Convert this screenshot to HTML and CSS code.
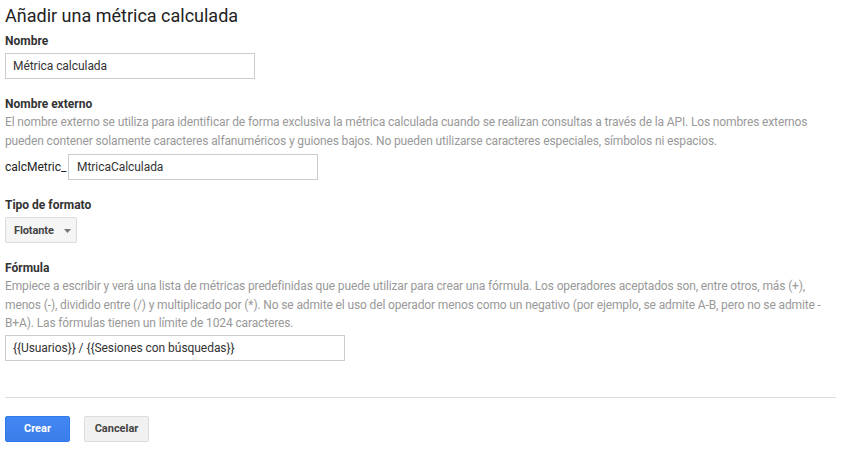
FILE: index.html
```html
<!DOCTYPE html>
<html lang="es">
<head>
<meta charset="utf-8">
<title>Añadir una métrica calculada</title>
<link rel="stylesheet" href="styles.css">
</head>
<body>
<div class="page">
  <h1 class="title">Añadir una métrica calculada</h1>

  <div class="field first">
    <div class="label">Nombre</div>
    <input class="input w250" type="text" value="Métrica calculada">
  </div>

  <div class="field">
    <div class="label">Nombre externo</div>
    <p class="desc">El nombre externo se utiliza para identificar de forma exclusiva la métrica calculada cuando se realizan consultas a través de la API. Los nombres externos pueden contener solamente caracteres alfanuméricos y guiones bajos. No pueden utilizarse caracteres especiales, símbolos ni espacios.</p>
    <div class="prefix-row">
      <span class="prefix">calcMetric_</span>
      <input class="input w250 pad9" type="text" value="MtricaCalculada">
    </div>
  </div>

  <div class="field">
    <div class="label">Tipo de formato</div>
    <button class="dropdown" type="button">
      <span>Flotante</span>
      <svg class="caret" width="7" height="4" viewBox="0 0 7 4"><path d="M0 0h7L3.5 4z" fill="#777"/></svg>
    </button>
  </div>

  <div class="field">
    <div class="label">Fórmula</div>
    <p class="desc tight">Empiece a escribir y verá una lista de métricas predefinidas que puede utilizar para crear una fórmula. Los operadores aceptados son, entre otros, más (+), menos (-), dividido entre (/) y multiplicado por (*). No se admite el uso del operador menos como un negativo (por ejemplo, se admite A-B, pero no se admite -B+A). Las fórmulas tienen un límite de 1024 caracteres.</p>
    <input class="input w340" type="text" value="{{Usuarios}} / {{Sesiones con búsquedas}}">
  </div>

  <hr class="divider">

  <div class="actions">
    <button class="btn primary" type="button">Crear</button>
    <button class="btn secondary" type="button">Cancelar</button>
  </div>
</div>
</body>
</html>
```

FILE: styles.css
```css
html, body {
  margin: 0;
  padding: 0;
  background: #fff;
}
body {
  font-family: Roboto, "Liberation Sans", Arial, sans-serif;
  color: #222;
}
.page {
  padding: 4px 8px 0 5px;
}
.title {
  margin: 0;
  font-size: 18px;
  line-height: 24px;
  font-weight: 400;
  color: #222;
}
.field {
  margin-top: 17px;
}
.field.first {
  margin-top: 5px;
}
.label {
  font-size: 12px;
  line-height: 16px;
  font-weight: 700;
  color: #333;
  margin-bottom: 4px;
}
.desc {
  margin: -3px 0 4px;
  font-size: 12px;
  line-height: 18.5px;
  letter-spacing: -0.13px;
  color: #999;
}
.desc.tight {
  margin-bottom: 2px;
}
.input {
  display: block;
  box-sizing: border-box;
  height: 26px;
  margin: 0;
  border: 1px solid #ccc;
  border-radius: 0;
  padding: 0 7px;
  font-family: Roboto, "Liberation Sans", Arial, sans-serif;
  font-size: 12px;
  letter-spacing: -0.05px;
  color: #333;
  background: #fff;
  outline: none;
}
.w250 { width: 250px; }
.w340 { width: 340px; }
.pad9 { padding-left: 8px; }
.prefix-row {
  display: flex;
  align-items: center;
  gap: 2px;
}
.prefix {
  font-size: 12px;
  color: #222;
  width: 61px;
  white-space: nowrap;
}
.dropdown {
  display: flex;
  align-items: center;
  gap: 10px;
  box-sizing: border-box;
  width: 72px;
  height: 26px;
  margin: 3px 0 0;
  padding: 0 0 0 8px;
  border: 1px solid #dcdcdc;
  border-radius: 2px;
  background: #f5f5f5;
  font-family: Roboto, "Liberation Sans", Arial, sans-serif;
  font-size: 11px;
  font-weight: 700;
  letter-spacing: -0.1px;
  color: #444;
}
.caret {
  display: block;
  margin-top: 2px;
}
.divider {
  margin: 36px 0 0;
  border: 0;
  border-top: 1px solid #ddd;
  height: 0;
}
.actions {
  display: flex;
  gap: 14px;
  margin-top: 18px;
}
.btn {
  box-sizing: border-box;
  width: 65px;
  height: 26px;
  margin: 0;
  padding: 0;
  border-radius: 2px;
  font-family: Roboto, "Liberation Sans", Arial, sans-serif;
  font-size: 11px;
  font-weight: 700;
}
.primary {
  background: #4285f4;
  background: linear-gradient(#4387f5, #3b7ee9);
  border: 1px solid #3079ed;
  color: #fff;
}
.secondary {
  background: #f1f1f1;
  border: 1px solid #dcdcdc;
  color: #444;
}
```
